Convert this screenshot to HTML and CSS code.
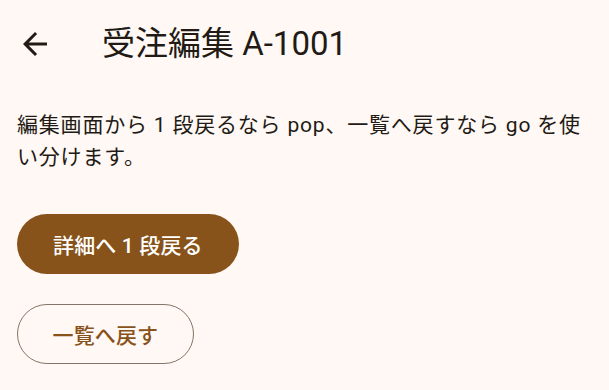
FILE: index.html
```html
<!DOCTYPE html>
<html lang="ja">
<head>
    <meta charset="UTF-8">
    <meta name="viewport" content="width=device-width, initial-scale=1.0">
    <title>受注編集 A-1001</title>
    <link rel="stylesheet" href="styles.css">
</head>
<body>

    <header class="app-bar">
        <button class="icon-btn" aria-label="戻る">
            <svg width="36" height="36" viewBox="0 0 24 24">
                <path d="M20 11H7.83l5.59-5.59L12 4l-8 8 8 8 1.41-1.41L7.83 13H20v-2z"/>
            </svg>
        </button>
        <h1 class="title">受注編集 A-1001</h1>
    </header>

    <main class="content">
        <p class="note">編集画面から 1 段戻るなら pop、一覧へ戻すなら go を使い分けます。</p>
        <button class="filled-btn">詳細へ 1 段戻る</button>
        <button class="outlined-btn">一覧へ戻す</button>
    </main>

</body>
</html>
```

FILE: styles.css
```css
:root {
    --bg-color: #fff8f5;
    --text-color: #221a14;
    --primary: #87531a;
    --outline: #857467;
}

* {
    margin: 0;
    padding: 0;
    box-sizing: border-box;
}

body {
    font-family: Roboto, "Noto Sans CJK JP", sans-serif;
    background-color: var(--bg-color);
    color: var(--text-color);
    width: 609px;
    height: 390px;
    overflow: hidden;
}

.app-bar {
    height: 88px;
    display: flex;
    align-items: center;
    padding-left: 17px;
    gap: 49px;
}

.icon-btn {
    width: 36px;
    height: 36px;
    border: none;
    background: transparent;
    display: flex;
}

.icon-btn svg {
    fill: var(--text-color);
}

.title {
    font-size: 33px;
    font-weight: 400;
    line-height: 40px;
}

.content {
    display: flex;
    flex-direction: column;
    align-items: flex-start;
    padding: 22px 17px 0;
}

.note {
    font-size: 21px;
    line-height: 31.5px;
    letter-spacing: 0.8px;
    margin-bottom: 41px;
}

.filled-btn,
.outlined-btn {
    font-family: inherit;
    font-size: 21px;
    font-weight: 500;
    letter-spacing: 0.15px;
    height: 60px;
    padding: 0 36px;
    border-radius: 30px;
    cursor: pointer;
}

.filled-btn {
    background-color: var(--primary);
    color: #ffffff;
    border: none;
    margin-bottom: 30px;
}

.outlined-btn {
    background-color: transparent;
    color: var(--primary);
    border: 1.5px solid var(--outline);
    padding: 0 34.5px;
}
```
